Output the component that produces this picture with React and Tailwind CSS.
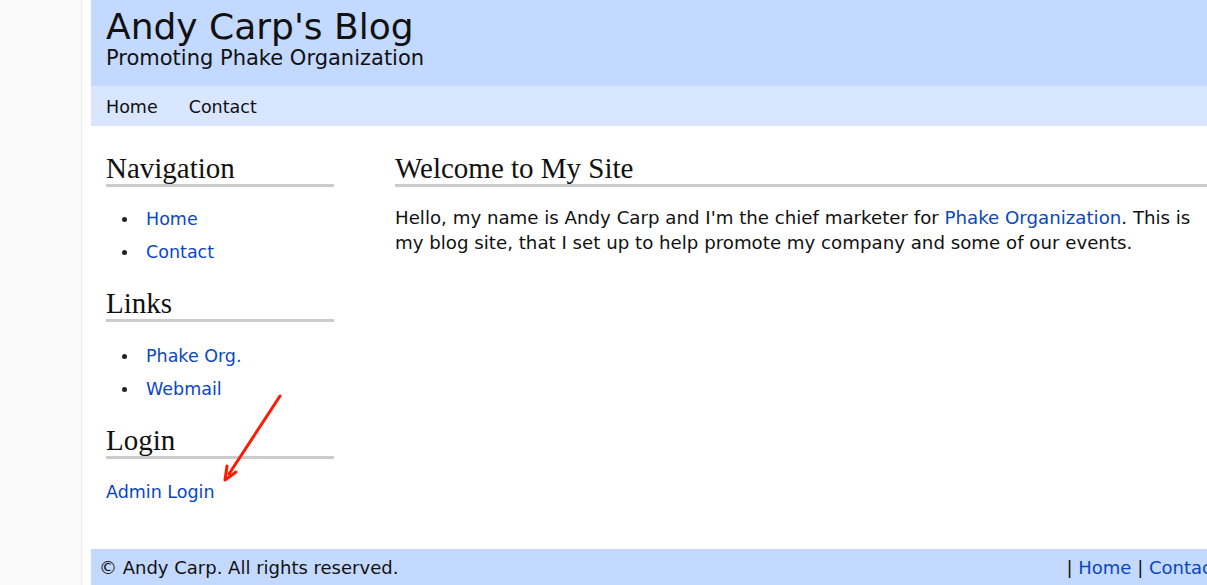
import React from "react";

function SideHeading({ title })
{
    return (
        <h2 className="text-[29px] leading-[32px] text-[#111] border-b-[3px] border-[#cccccc] font-['Liberation_Serif',serif]">{title}</h2>
    );
}

function SideList({ items, top })
{
    return (
        <ul className={"text-[17.5px] leading-[33px] text-[#0a47c2] " + top}>
            {items.map((item) => (
                <li key={item} className="flex items-center">
                    <span className="w-[5px] h-[5px] rounded-full bg-[#222] ml-[16px] mr-[19px]"></span>
                    {item}
                </li>
            ))}
        </ul>
    );
}

export default function App()
{
    return (
        <div className="w-[1207px] h-[585px] overflow-hidden bg-white flex font-['DejaVu_Sans',sans-serif] relative">
            {/* left gutter */}
            <div className="w-[82px] shrink-0 bg-[#f9f9f9] border-r border-[#ececec]"></div>
            <div className="w-[9px] shrink-0"></div>

            <div className="w-[1138px] shrink-0 flex flex-col">
                {/* header */}
                <div className="bg-[#c3d9ff] h-[86px] shrink-0 pl-[15px] pt-[7px]">
                    <h1 className="text-[36px] leading-[40px] text-[#111]">Andy Carp's Blog</h1>
                    <p className="text-[21px] leading-[22px] text-[#111]">Promoting Phake Organization</p>
                </div>
                <div className="bg-[#d8e6ff] h-[40px] shrink-0 pl-[15px] pt-[2px] flex items-center gap-[31px] text-[17.5px] text-[#111]">
                    <span>Home</span>
                    <span>Contact</span>
                </div>

                {/* body */}
                <div className="flex h-[423px] shrink-0 pt-[26px] pl-[15px]">
                    <div className="w-[228px] shrink-0">
                        <SideHeading title="Navigation" />
                        <SideList items={["Home", "Contact"]} top="pt-[16px]" />
                        <div className="h-[18px]"></div>
                        <SideHeading title="Links" />
                        <SideList items={["Phake Org.", "Webmail"]} top="pt-[18px]" />
                        <div className="h-[18px]"></div>
                        <SideHeading title="Login" />
                        <p className="pt-[17px] text-[17.5px] leading-[33px] text-[#0a47c2]">Admin Login</p>
                    </div>
                    <div className="ml-[61px] flex-1">
                        <h2 className="text-[29px] leading-[32px] text-[#111] border-b-[3px] border-[#cccccc] font-['Liberation_Serif',serif]">Welcome to My Site</h2>
                        <p className="pt-[18px] text-[18.2px] leading-[25px] text-[#111] w-[812px]">
                            Hello, my name is Andy Carp and I'm the chief marketer for <span className="text-[#0a47c2]">Phake Organization</span>. This is my blog site, that I set up to help promote my company and some of our events.
                        </p>
                    </div>
                </div>

                {/* footer */}
                <div className="bg-[#c3d9ff] h-[40px] shrink-0 flex justify-between pl-[8px] pr-[10px] pt-[5px] text-[18px] text-[#111]">
                    <span>© Andy Carp. All rights reserved.</span>
                    <span className="text-[#0a47c2]"><span className="text-[#111]">|</span> Home <span className="text-[#111]">|</span> Contact</span>
                </div>
            </div>

            {/* annotation arrow */}
            <svg className="absolute left-0 top-0 pointer-events-none" width="1207" height="585">
                <line x1="280" y1="396" x2="229" y2="474" stroke="#ff1a00" strokeWidth="3" strokeLinecap="round" />
                <path d="M225 480 L227 466 M225 480 L236 472" stroke="#ff1a00" strokeWidth="3" strokeLinecap="round" fill="none" />
            </svg>
        </div>
    );
}
